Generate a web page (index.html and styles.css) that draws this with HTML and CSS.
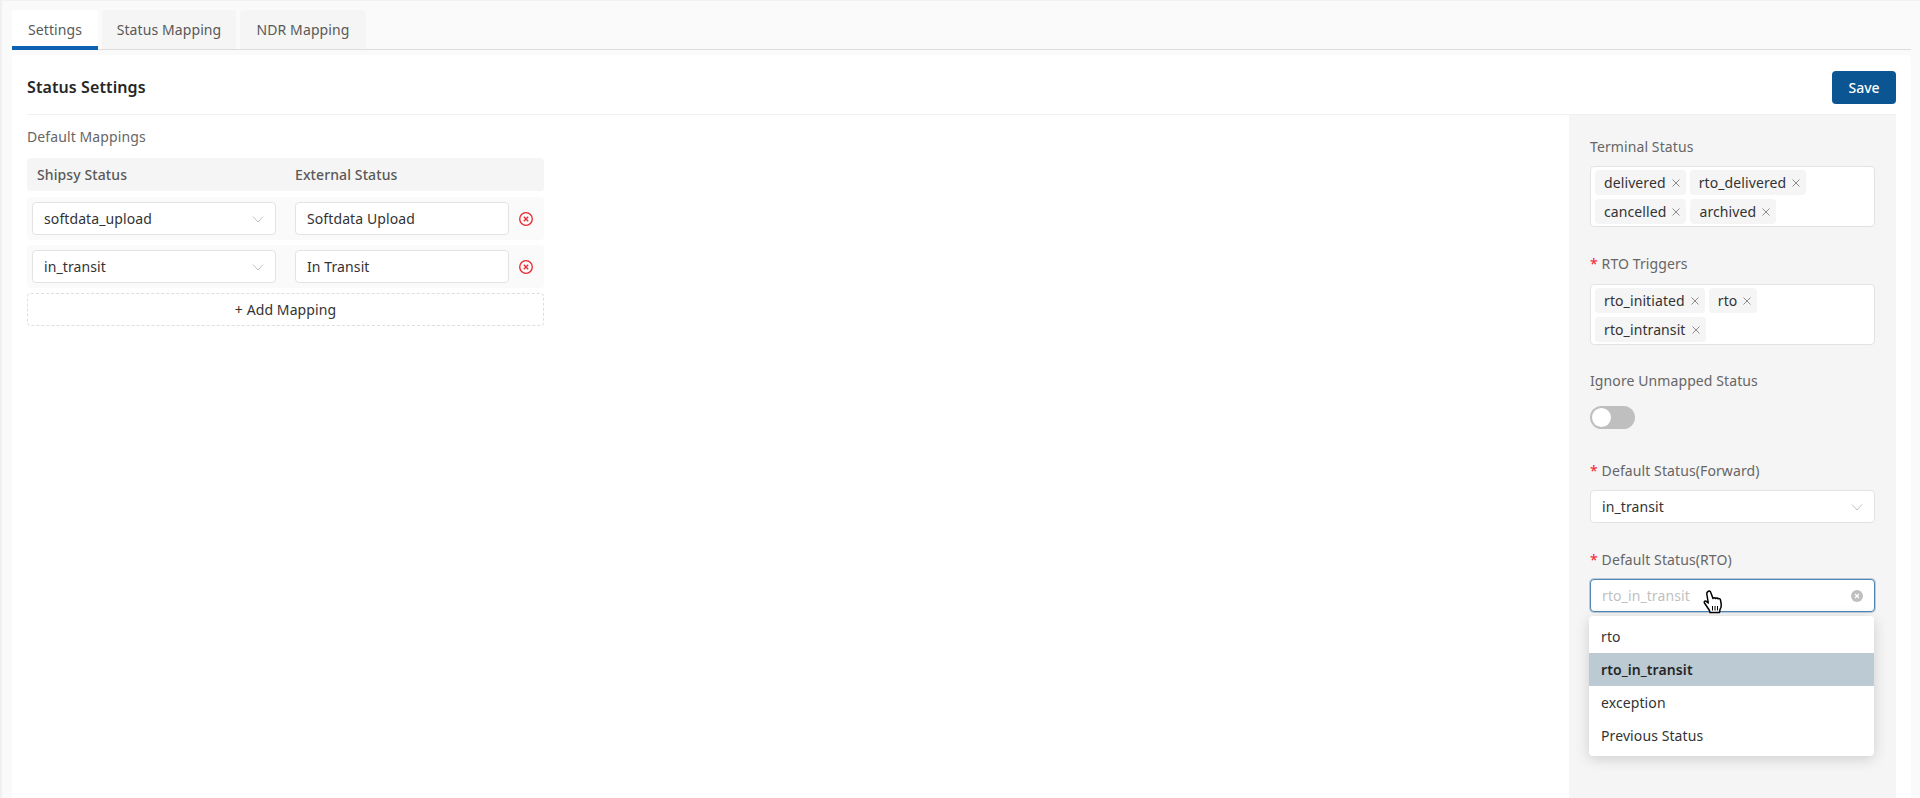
FILE: index.html
```html
<!DOCTYPE html>
<html>
<head>
    <title>Status Settings</title>
    <link rel="stylesheet" href="styles.css">
</head>
<body>
    <div class="tabs">
        <div class="tab active">Settings</div>
        <div class="tab">Status Mapping</div>
        <div class="tab">NDR Mapping</div>
    </div>

    <div class="card">
        <div class="card-head">
            <h2>Status Settings</h2>
            <button class="save-btn">Save</button>
        </div>
        <div class="card-body">
            <div class="mappings">
                <div class="section-label">Default Mappings</div>
                <div class="map-head">
                    <span class="col-a">Shipsy Status</span>
                    <span>External Status</span>
                </div>
                <div class="map-row">
                    <div class="select select-a">softdata_upload
                        <svg class="chev" viewBox="0 0 12 12"><path d="M1 3.5 6 9l5-5.500"/></svg>
                    </div>
                    <div class="text-input">Softdata Upload</div>
                    <svg class="remove" viewBox="0 0 16 16"><circle cx="8" cy="8" r="6.300"/><path d="M5.800 5.800l4.400 4.400M10.200 5.800l-4.400 4.400"/></svg>
                </div>
                <div class="map-row">
                    <div class="select select-a">in_transit
                        <svg class="chev" viewBox="0 0 12 12"><path d="M1 3.5 6 9l5-5.500"/></svg>
                    </div>
                    <div class="text-input">In Transit</div>
                    <svg class="remove" viewBox="0 0 16 16"><circle cx="8" cy="8" r="6.300"/><path d="M5.800 5.800l4.400 4.400M10.200 5.800l-4.400 4.400"/></svg>
                </div>
                <div class="add-btn">+ Add Mapping</div>
            </div>

            <div class="side">
                <div class="field">
                    <div class="field-label">Terminal Status</div>
                    <div class="multi">
                        <span class="tag">delivered<svg class="tag-x" viewBox="0 0 8 8"><path d="M.5.5l7 7M7.500.5l-7 7"/></svg></span>
                        <span class="tag">rto_delivered<svg class="tag-x" viewBox="0 0 8 8"><path d="M.5.5l7 7M7.500.5l-7 7"/></svg></span>
                        <span class="tag">cancelled<svg class="tag-x" viewBox="0 0 8 8"><path d="M.5.5l7 7M7.500.5l-7 7"/></svg></span>
                        <span class="tag">archived<svg class="tag-x" viewBox="0 0 8 8"><path d="M.5.5l7 7M7.500.5l-7 7"/></svg></span>
                    </div>
                </div>
                <div class="field field-triggers">
                    <div class="field-label"><b>*</b> RTO Triggers</div>
                    <div class="multi">
                        <span class="tag">rto_initiated<svg class="tag-x" viewBox="0 0 8 8"><path d="M.5.5l7 7M7.500.5l-7 7"/></svg></span>
                        <span class="tag">rto<svg class="tag-x" viewBox="0 0 8 8"><path d="M.5.5l7 7M7.500.5l-7 7"/></svg></span>
                        <span class="tag">rto_intransit<svg class="tag-x" viewBox="0 0 8 8"><path d="M.5.5l7 7M7.500.5l-7 7"/></svg></span>
                    </div>
                </div>
                <div class="field field-toggle">
                    <div class="field-label">Ignore Unmapped Status</div>
                    <div class="toggle"><span></span></div>
                </div>
                <div class="field field-forward">
                    <div class="field-label"><b>*</b> Default Status(Forward)</div>
                    <div class="select">in_transit
                        <svg class="chev" viewBox="0 0 12 12"><path d="M1 3.5 6 9l5-5.500"/></svg>
                    </div>
                </div>
                <div class="field field-rto">
                    <div class="field-label"><b>*</b> Default Status(RTO)</div>
                    <div class="select focused">rto_in_transit
                        <svg class="clear" viewBox="0 0 14 14"><circle cx="7" cy="7" r="6"/><path d="M5 5l4 4M9 5l-4 4"/></svg>
                    </div>
                    <div class="dropdown">
                        <div class="option">rto</div>
                        <div class="option selected">rto_in_transit</div>
                        <div class="option">exception</div>
                        <div class="option">Previous Status</div>
                    </div>
                    <svg class="cursor" viewBox="0 0 22 26">
                        <path d="M6 2.500c1-1 2.300-.5 2.800 1L11 9.500c.5-1 2-1 2.600 0 .6-.8 2-.7 2.500.3.700-.5 2-.2 2.300.8l.8 4.400c.3 2-.2 4-1.200 5.500l-.5 3H8l-.8-2.500L2.500 14c-.8-1 .2-2.500 1.500-1.800l2.300 1.800L4.800 5c-.2-1 .4-2 1.200-2.500z"/>
                        <path class="lines" d="M10.500 17v4.500M13 17v4.500M15.500 17v4.500"/>
                    </svg>
                </div>
            </div>
        </div>
    </div>
</body>
</html>
```

FILE: styles.css
```css
* { box-sizing: border-box; }
html, body { height: 100%; }
body {
    margin: 0;
    height: 798px;
    overflow: hidden;
    display: flex;
    flex-direction: column;
    padding: 9px 9px 0 10px;
    background-color: #fafafa;
    border-left: 2px solid #f0f0f0;
    border-top: 1px solid #f2f2f2;
    font-family: "Noto Sans", "Open Sans", Arial, sans-serif;
    font-size: 14px;
    letter-spacing: 0.1px;
    color: #333;
}

.tabs {
    display: flex;
    gap: 4px;
    height: 40px;
    flex: none;
    border-bottom: 1px solid #dcdcdc;
    margin-bottom: 5px;
}
.tab {
    line-height: 39px;
    text-align: center;
    background-color: #f5f5f5;
    color: #595959;
    border-radius: 4px 4px 0 0;
}
.tab:nth-child(2) { width: 134px; }
.tab:nth-child(3) { width: 126px; }
.tab.active {
    width: 86px;
    height: 40px;
    background-color: #fff;
    border-bottom: 4px solid #0b62b3;
}

.card {
    flex: 1;
    min-height: 0;
    display: flex;
    flex-direction: column;
    background-color: #fff;
    border-radius: 4px 4px 0 0;
    padding: 0 15px;
}
.card-head {
    flex: none;
    height: 60px;
    display: flex;
    align-items: center;
    justify-content: space-between;
    padding-top: 5px;
    border-bottom: 1px solid #f0f0f0;
}
.card-head h2 {
    margin: 0;
    font-size: 16px;
    font-weight: 600;
    color: #262626;
}
.save-btn {
    width: 64px;
    height: 33px;
    border: 0;
    border-radius: 4px;
    background-color: #0a5592;
    color: #fff;
    font-family: inherit;
    font-size: 14px;
    font-weight: 500;
}

.card-body {
    flex: 1;
    display: flex;
    justify-content: space-between;
    min-height: 0;
}

.mappings { width: 517px; padding-top: 11px; }
.section-label { line-height: 22px; color: #666; margin-bottom: 10px; }
.map-head {
    display: flex;
    height: 33px;
    align-items: center;
    padding-left: 10px;
    margin-bottom: 6px;
    background-color: #f5f5f5;
    border-radius: 4px;
    color: #595959;
    font-weight: 500;
}
.col-a { width: 258px; }
.map-row {
    display: flex;
    align-items: center;
    height: 43px;
    margin-bottom: 5px;
    padding-left: 5px;
    background-color: #fafafa;
    border-radius: 4px;
}
.select {
    position: relative;
    display: flex;
    align-items: center;
    height: 33px;
    padding-left: 11px;
    background-color: #fff;
    border: 1px solid #e3e3e3;
    border-radius: 4px;
    color: #333;
}
.select-a { width: 244px; margin-right: 19px; }
.chev {
    position: absolute;
    right: 11px;
    top: 10px;
    width: 12px;
    height: 12px;
    fill: none;
    stroke: #bfbfbf;
    stroke-width: 1;
}
.text-input {
    width: 214px;
    height: 33px;
    line-height: 31px;
    padding-left: 11px;
    background-color: #fff;
    border: 1px solid #e3e3e3;
    border-radius: 4px;
    color: #333;
}
.remove {
    width: 16px;
    height: 16px;
    margin-left: 9px;
    fill: none;
    stroke: #e8262d;
    stroke-width: 1.300;
}
.add-btn {
    height: 33px;
    line-height: 31px;
    text-align: center;
    border: 1px dashed #dedede;
    border-radius: 4px;
    color: #333;
}

.side {
    width: 327px;
    padding: 22px 21px 0;
    background-color: #f5f5f5;
}
.field { margin-bottom: 27px; }
.field-label {
    line-height: 20px;
    margin-bottom: 9px;
    color: #666;
}
.field-label b {
    color: #f5222d;
    font-weight: 400;
}
.multi {
    display: flex;
    flex-wrap: wrap;
    align-content: flex-start;
    gap: 4px;
    height: 61px;
    padding: 3px 30px 3px 4px;
    background-color: #fff;
    border: 1px solid #e3e3e3;
    border-radius: 4px;
}
.tag {
    display: flex;
    align-items: center;
    height: 25px;
    padding: 0 6px 0 9px;
    background-color: #f5f5f5;
    border-radius: 4px;
    color: #333;
}
.tag-x {
    width: 8px;
    height: 8px;
    margin-left: 6px;
    margin-top: 1px;
    fill: none;
    stroke: #8c8c8c;
    stroke-width: 1;
}
.field-triggers { margin-bottom: 26px; }
.field-triggers .field-label { margin-bottom: 10px; }
.field-toggle { margin-bottom: 30px; height: 60px; }
.field-toggle .field-label { margin-bottom: 15px; }
.toggle {
    width: 45px;
    height: 23px;
    padding: 2px;
    background-color: #bfbfbf;
    border-radius: 12px;
}
.toggle span {
    display: block;
    width: 19px;
    height: 19px;
    background-color: #fff;
    border-radius: 50%;
}
.field-forward { margin-bottom: 27px; }
.field-rto { position: relative; }
.focused {
    border-color: #4f86b4;
    box-shadow: 0 0 0 1px rgba(10, 85, 146, 0.25);
    color: #bfbfbf;
}
.clear {
    position: absolute;
    right: 10px;
    top: 9px;
    width: 14px;
    height: 14px;
}
.clear circle { fill: #bfbfbf; }
.clear path { stroke: #fff; stroke-width: 1.200; }
.dropdown {
    position: absolute;
    left: -1px;
    top: 66px;
    width: 285px;
    padding: 4px 0;
    background-color: #fff;
    border-radius: 4px;
    box-shadow: 0 3px 14px rgba(0, 0, 0, 0.16);
}
.option {
    height: 33px;
    line-height: 33px;
    padding-left: 12px;
    color: #333;
}
.option.selected {
    background-color: #bbcad3;
    font-weight: 600;
    color: #262626;
}
.cursor {
    position: absolute;
    left: 112px;
    top: 39px;
    width: 22px;
    height: 26px;
    fill: #fff;
    stroke: #000;
    stroke-width: 1.500;
    stroke-linejoin: round;
}
.cursor .lines { fill: none; stroke-width: 1; }
```
